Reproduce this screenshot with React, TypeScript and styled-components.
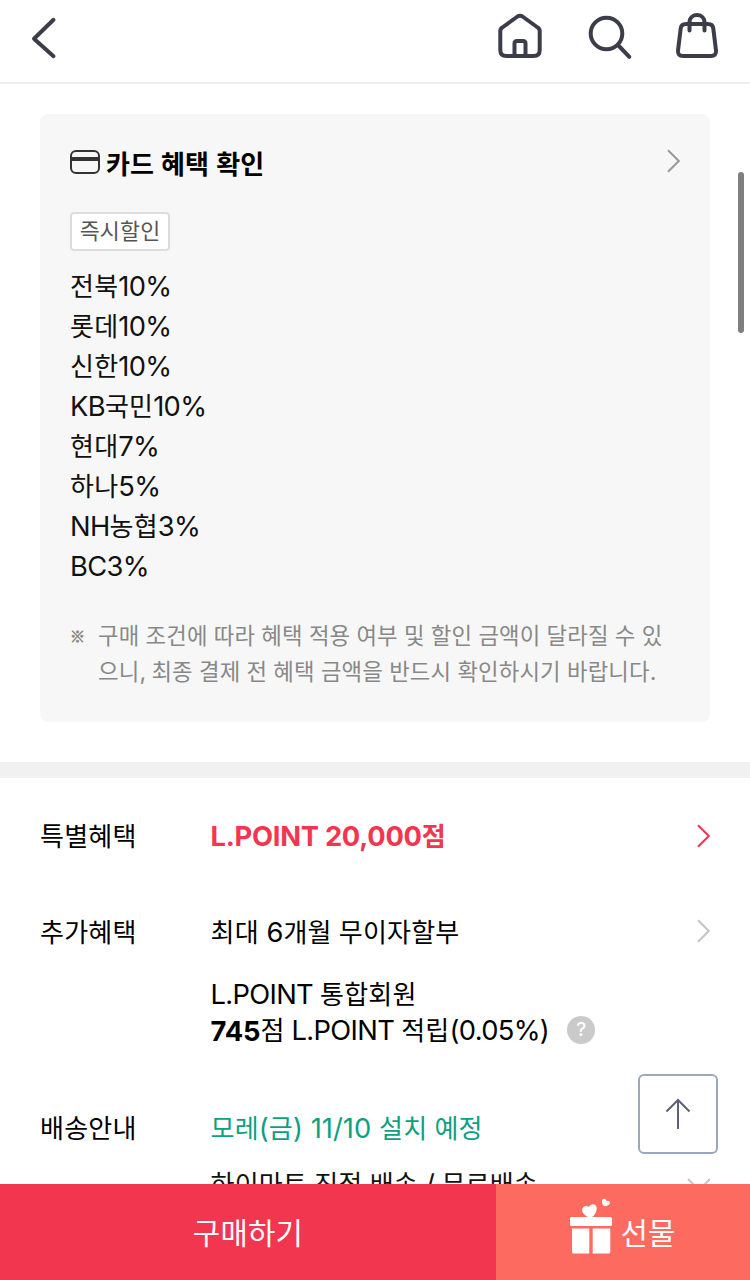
import React from "react";
import styled, { createGlobalStyle } from "styled-components";

const GlobalStyle = createGlobalStyle`
  * { box-sizing: border-box; }
  body { margin: 0; background: #fff; }
  button { border: 0; padding: 0; background: none; font: inherit; color: inherit; }
  svg { display: block; flex: none; }
`;

const Page = styled.div`
  position: relative;
  display: flex;
  flex-direction: column;
  width: 750px;
  height: 1280px;
  overflow: hidden;
  background: #fff;
  color: #000;
  font-family: Inter, "Noto Sans CJK KR", sans-serif;
  font-size: 28px;
`;

const TextRun = styled.span<{ $tracking: number }>`
  font-size: 0.975em;
  letter-spacing: ${(p) => p.$tracking}px;
  white-space: pre;
`;

const Hangul = styled.span`
  font-family: "Noto Sans CJK KR", sans-serif;
  font-size: 0.954em;
  line-height: 1;
  letter-spacing: 0.007em;
  word-spacing: 0.046em;
`;

/* Korean runs are set a little smaller than the Latin letters and figures. */
const Text = ({ children, tracking = -0.65 }: { children: string; tracking?: number }) => (
  <TextRun $tracking={tracking}>
    {children
      .split(/([\uac00-\ud7a3]+(?:\s+[\uac00-\ud7a3]+)*)/)
      .filter(Boolean)
      .map((part, i) =>
        /[\uac00-\ud7a3]/.test(part) ? <Hangul key={i}>{part}</Hangul> : part
      )}
  </TextRun>
);

const Header = styled.header`
  flex: none;
  display: flex;
  align-items: flex-start;
  justify-content: space-between;
  height: 84px;
  padding: 10px 30px 0;
  border-bottom: 2px solid #eee;
`;

const HeaderActions = styled.nav`
  display: flex;
  gap: 40px;
`;

const Main = styled.main`
  flex: 1;
  min-height: 0;
  overflow: hidden;
`;

const Card = styled.section`
  height: 608px;
  margin: 30px 40px 40px;
  padding: 30px;
  border-radius: 8px;
  background: #f7f7f7;
`;

const CardTitle = styled.h2`
  display: flex;
  align-items: center;
  height: 36px;
  margin: 0;
  font-size: 28px;
  line-height: 36px;
  font-weight: 700;
`;

const TitleText = styled.span`
  flex: 1;
  margin: 5px 0 0 6px;

  ${Hangul} {
    letter-spacing: 0;
    word-spacing: 0.05em;
  }
`;

const TitleArrow = styled.span`
  margin-bottom: 2px;
`;

const Tag = styled.span`
  display: flex;
  align-items: center;
  justify-content: center;
  width: 100px;
  height: 39px;
  margin: 32px 0 15px;
  padding-bottom: 2px;
  border: 2px solid #ddd;
  border-radius: 4px;
  background: #fff;
  color: #555;
  font-size: 23.4px;
`;

const CardList = styled.ul`
  margin: 0;
  padding: 0;
  list-style: none;
  line-height: 40px;
  color: #111;
`;

const BankItem = styled.li`
  height: 40px;
`;

const Notice = styled.p`
  display: flex;
  margin: 32px 0 0;
  font-size: 24px;
  line-height: 36px;
  color: #888;
  white-space: nowrap;
`;

const NoticeMark = styled.span`
  width: 28px;
  font-family: "Noto Sans CJK KR", sans-serif;
  font-size: 15px;
  -webkit-text-stroke: 0.6px #888;
`;

const Divider = styled.hr`
  height: 16px;
  margin: 0;
  border: 0;
  background: #f1f1f1;
`;

const Row = styled.section<{ $top: number }>`
  display: grid;
  grid-template-columns: 170.5px 1fr auto;
  margin: 0 40px;
  padding-top: ${(p) => p.$top}px;
  line-height: 36px;
`;

const RowBody = styled.div`
  display: flex;
  flex-direction: column;
`;

const Line = styled.div<{ $top?: number; $color?: string; $bold?: boolean }>`
  display: flex;
  align-items: center;
  height: 36px;
  padding-top: 2px;
  margin-top: ${(p) => p.$top ?? 0}px;
  color: ${(p) => p.$color ?? "#000"};
  font-weight: ${(p) => (p.$bold ? 700 : 400)};
  white-space: pre;
`;

const Arrow = styled.span<{ $top?: number }>`
  display: flex;
  align-items: center;
  height: 36px;
  margin-top: ${(p) => p.$top ?? 0}px;
`;

const Help = styled.span`
  display: flex;
  align-items: center;
  justify-content: center;
  width: 28px;
  height: 28px;
  margin: 0 0 2px 18px;
  border-radius: 50%;
  background: #cacaca;
  color: #fff;
  font-size: 19px;
  font-weight: 500;
`;

const TopButton = styled.button`
  position: absolute;
  right: 32px;
  bottom: 126px;
  display: flex;
  align-items: center;
  justify-content: center;
  width: 80px;
  height: 80px;
  border: 2px solid #9aa8bd;
  border-radius: 6px;
  background: #fff;
`;

const ScrollThumb = styled.div`
  position: absolute;
  top: 172px;
  right: 6px;
  width: 6px;
  height: 161px;
  border-radius: 3px;
  background: #7f7f7f;
`;

const Footer = styled.footer`
  flex: none;
  display: flex;
  height: 96px;
  color: #fff;
  font-size: 32px;
`;

const BuyButton = styled.button`
  width: 496px;
  background: #f2364f;
`;

const GiftButton = styled.button`
  flex: 1;
  display: flex;
  align-items: center;
  justify-content: center;
  gap: 8px;
  padding-top: 2px;
  background: #fd6a5f;
`;

const GiftIcon = styled.svg`
  margin-bottom: 10px;
  overflow: visible;
`;

const Chevron = ({ color, down }: { color: string; down?: boolean }) => (
  <svg
    width={down ? 24 : 14}
    height={down ? 14 : 24}
    viewBox={down ? "0 0 24 14" : "0 0 14 24"}
    fill="none"
    stroke={color}
    strokeWidth="2"
  >
    <path d={down ? "M2 1L13 12L24 1" : "M2 1.3L12.8 12L2 22.7"} />
  </svg>
);

const banks = ["전북10%", "롯데10%", "신한10%", "KB국민10%", "현대7%", "하나5%", "NH농협3%", "BC3%"];

const ink = { fill: "none", stroke: "#3d3d49", strokeWidth: 4, strokeLinecap: "round", strokeLinejoin: "round" } as const;

export default function App() {
  return (
    <Page>
      <GlobalStyle />
      <Header>
        <button aria-label="뒤로">
          <svg width="28" height="56" viewBox="0 0 28 56" {...ink}>
            <path d="M23.5 9.8L4 28.7L23.5 46.2" />
          </svg>
        </button>
        <HeaderActions>
          <svg width="51" height="56" viewBox="495 10 51 56" {...ink}>
            <path d="M500.3 31Q500.3 28.7 502.3 27.5L517.5 16.5Q520 15 522.5 16.5L537.7 27.5Q539.7 28.7 539.7 31V50Q539.7 56 533.7 56H506.3Q500.3 56 500.3 50Z" />
            <path d="M514.5 55V43.5Q514.5 41 517 41H523Q525.5 41 525.5 43.5V55" />
          </svg>
          <svg width="48" height="56" viewBox="586 10 48 56" {...ink}>
            <circle cx="606.5" cy="33.5" r="15.8" />
            <path d="M618 45L629.3 56.8" />
          </svg>
          <svg width="46" height="56" viewBox="674 10 46 56" {...ink}>
            <path d="M686 24H708Q712.8 24 713.3 28.5L716 50.5Q716.5 56 711 56H683Q677.5 56 678 50.5L680.7 28.5Q681.2 24 686 24Z" />
            <path d="M689.5 30.5V22.5C689.5 12.5 704.5 12.5 704.5 22.5V30.5" />
          </svg>
        </HeaderActions>
      </Header>
      <Main>
        <Card>
          <CardTitle>
            <svg width="30" height="24" viewBox="0 0 30 24" fill="none" stroke="#333">
              <rect x="1" y="1" width="28" height="22" rx="5" strokeWidth="2" />
              <path d="M1 9H29" strokeWidth="4" />
            </svg>
            <TitleText><Text>카드 혜택 확인</Text></TitleText>
            <TitleArrow><Chevron color="#999" /></TitleArrow>
          </CardTitle>
          <Tag><Text>즉시할인</Text></Tag>
          <CardList>
            {banks.map((bank) => (
              <BankItem key={bank}><Text>{bank}</Text></BankItem>
            ))}
          </CardList>
          <Notice>
            <NoticeMark>※</NoticeMark>
            <span>
              <Text>구매 조건에 따라 혜택 적용 여부 및 할인 금액이 달라질 수 있</Text>
              <br />
              <Text>으니, 최종 결제 전 혜택 금액을 반드시 확인하시기 바랍니다.</Text>
            </span>
          </Notice>
        </Card>
        <Divider />
        <Row $top={40}>
          <Line><Text>특별혜택</Text></Line>
          <Line $color="#f2364f" $bold><Text tracking={-0.25}>L.POINT 20,000점</Text></Line>
          <Arrow><Chevron color="#f2364f" /></Arrow>
        </Row>
        <Row $top={60}>
          <Line><Text>추가혜택</Text></Line>
          <RowBody>
            <Line><Text tracking={0}>최대 6개월 무이자할부</Text></Line>
            <Line $top={26}><Text>L.POINT 통합회원</Text></Line>
            <Line>
              <b><Text tracking={-0.1}>745</Text></b>
              <Text>점 L.POINT 적립(0.05%)</Text>
              <Help>?</Help>
            </Line>
          </RowBody>
          <Arrow $top={-1}><Chevron color="#c4c4c4" /></Arrow>
        </Row>
        <Row $top={62}>
          <Line><Text>배송안내</Text></Line>
          <RowBody>
            <Line $color="#0d9f82"><Text tracking={0.05}>모레(금) 11/10 설치 예정</Text></Line>
            <Line $top={20} $color="#111"><Text tracking={-0.6}>하이마트 직접 배송 / 무료배송</Text></Line>
          </RowBody>
          <Arrow $top={57}><Chevron color="#c4c4c4" down /></Arrow>
        </Row>
      </Main>
      <Footer>
        <BuyButton><Text>구매하기</Text></BuyButton>
        <GiftButton>
          <GiftIcon width="42" height="56" viewBox="0 0 42 56" fill="#fff">
            <rect y="17" width="42" height="9" rx="1.5" />
            <path d="M2 28.5H19.3V53.5H3.5Q2 53.5 2 52ZM22.7 28.5H40.3V52Q40.3 53.5 38.8 53.5H22.7Z" />
            <path d="M18 17.3C14.5 15.2 12 12.8 12.1 9.8C12.2 6.6 16.2 4.6 19 6.9C20.3 3.6 25 3.2 26.4 6.4C27.6 10 25.3 14.3 22 17.3Z" />
            <path d="M34.2 6.2C32.2 4.6 31.3 1.4 32.3-.2C33.4-1.9 36-1.2 36.4 1C38.6 .3 40.6 1.8 39.8 3.5C38.9 5.3 36.6 6.4 34.2 6.2Z" />
          </GiftIcon>
          <Text>선물</Text>
        </GiftButton>
      </Footer>
      <TopButton aria-label="맨 위로">
        <svg width="26" height="32" viewBox="0 0 26 32" fill="none" stroke="#5c6173" strokeWidth="2">
          <path d="M13 31V2M1.5 13.5L13 2L24.5 13.5" />
        </svg>
      </TopButton>
      <ScrollThumb />
    </Page>
  );
}
